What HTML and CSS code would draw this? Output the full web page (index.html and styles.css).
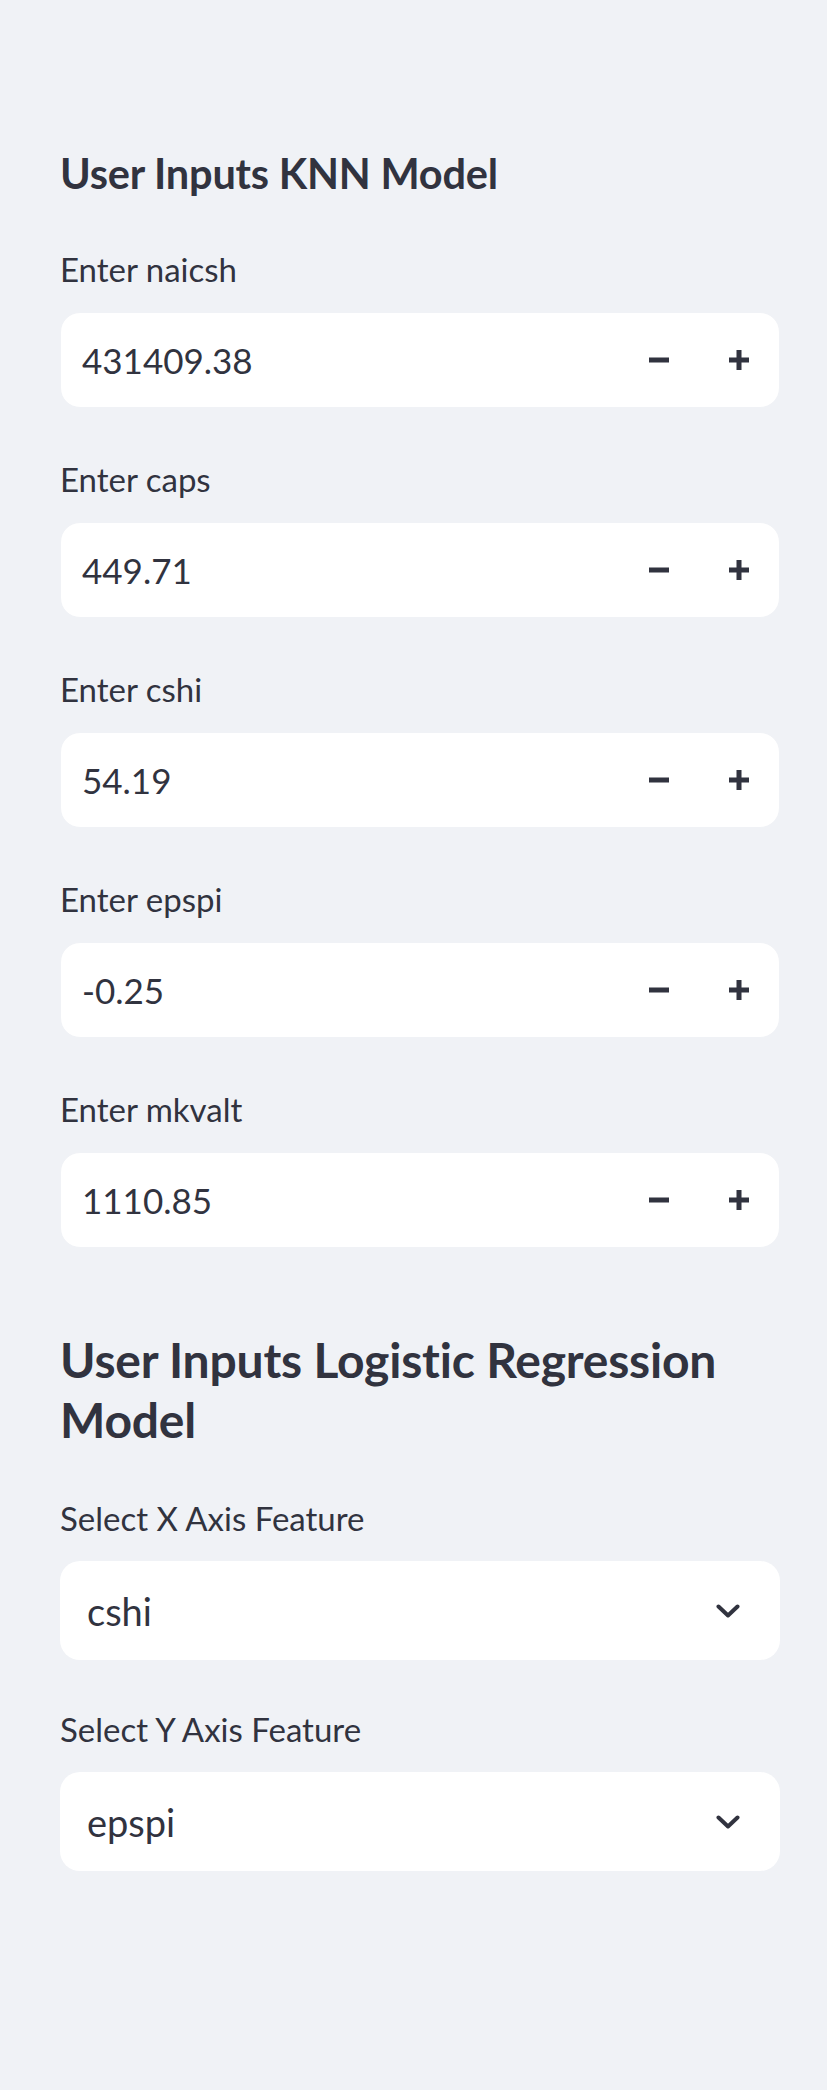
FILE: index.html
```html
<!DOCTYPE html>
<html lang="en">
<head>
<meta charset="utf-8">
<title>User Inputs</title>
<link rel="stylesheet" href="styles.css">
</head>
<body>
<aside class="sidebar">
  <h3 class="subheader">User Inputs KNN Model</h3>

  <div class="widget">
    <label class="label">Enter naicsh</label>
    <div class="number-input">
      <span class="value">431409.38</span>
      <button class="step" aria-label="Decrement"><svg width="20" height="20" viewBox="0 0 20 20"><rect x="0" y="7.5" width="20" height="5" fill="#31333F"/></svg></button>
      <button class="step" aria-label="Increment"><svg width="20" height="20" viewBox="0 0 20 20"><rect x="0" y="7.5" width="20" height="5" fill="#31333F"/><rect x="7.5" y="0" width="5" height="20" fill="#31333F"/></svg></button>
    </div>
  </div>

  <div class="widget">
    <label class="label">Enter caps</label>
    <div class="number-input">
      <span class="value">449.71</span>
      <button class="step" aria-label="Decrement"><svg width="20" height="20" viewBox="0 0 20 20"><rect x="0" y="7.5" width="20" height="5" fill="#31333F"/></svg></button>
      <button class="step" aria-label="Increment"><svg width="20" height="20" viewBox="0 0 20 20"><rect x="0" y="7.5" width="20" height="5" fill="#31333F"/><rect x="7.5" y="0" width="5" height="20" fill="#31333F"/></svg></button>
    </div>
  </div>

  <div class="widget">
    <label class="label">Enter cshi</label>
    <div class="number-input">
      <span class="value">54.19</span>
      <button class="step" aria-label="Decrement"><svg width="20" height="20" viewBox="0 0 20 20"><rect x="0" y="7.5" width="20" height="5" fill="#31333F"/></svg></button>
      <button class="step" aria-label="Increment"><svg width="20" height="20" viewBox="0 0 20 20"><rect x="0" y="7.5" width="20" height="5" fill="#31333F"/><rect x="7.5" y="0" width="5" height="20" fill="#31333F"/></svg></button>
    </div>
  </div>

  <div class="widget">
    <label class="label">Enter epspi</label>
    <div class="number-input">
      <span class="value">-0.25</span>
      <button class="step" aria-label="Decrement"><svg width="20" height="20" viewBox="0 0 20 20"><rect x="0" y="7.5" width="20" height="5" fill="#31333F"/></svg></button>
      <button class="step" aria-label="Increment"><svg width="20" height="20" viewBox="0 0 20 20"><rect x="0" y="7.5" width="20" height="5" fill="#31333F"/><rect x="7.5" y="0" width="5" height="20" fill="#31333F"/></svg></button>
    </div>
  </div>

  <div class="widget">
    <label class="label">Enter mkvalt</label>
    <div class="number-input">
      <span class="value">1110.85</span>
      <button class="step" aria-label="Decrement"><svg width="20" height="20" viewBox="0 0 20 20"><rect x="0" y="7.5" width="20" height="5" fill="#31333F"/></svg></button>
      <button class="step" aria-label="Increment"><svg width="20" height="20" viewBox="0 0 20 20"><rect x="0" y="7.5" width="20" height="5" fill="#31333F"/><rect x="7.5" y="0" width="5" height="20" fill="#31333F"/></svg></button>
    </div>
  </div>

  <h2 class="header">User Inputs Logistic Regression Model</h2>

  <div class="widget widget-select">
    <label class="label">Select X Axis Feature</label>
    <div class="select">
      <span class="value">cshi</span>
      <svg class="chevron" width="24" height="14" viewBox="0 0 24 14"><polyline points="2.5,2.5 12,11.5 21.5,2.5" fill="none" stroke="#31333F" stroke-width="4" stroke-linecap="round" stroke-linejoin="round"/></svg>
    </div>
  </div>

  <div class="widget widget-select">
    <label class="label">Select Y Axis Feature</label>
    <div class="select">
      <span class="value">epspi</span>
      <svg class="chevron" width="24" height="14" viewBox="0 0 24 14"><polyline points="2.5,2.5 12,11.5 21.5,2.5" fill="none" stroke="#31333F" stroke-width="4" stroke-linecap="round" stroke-linejoin="round"/></svg>
    </div>
  </div>
</aside>
</body>
</html>
```

FILE: styles.css
```css
html, body {
  margin: 0;
  padding: 0;
  background: #f0f2f6;
  min-height: 2090px;
}

body {
  font-family: "Lato", "Noto Sans", sans-serif;
  color: #31333f;
}

.sidebar {
  display: flex;
  flex-direction: column;
  padding: 146px 47px 0 60px;
}

.subheader {
  margin: 0 0 41px;
  font-size: 41.5px;
  font-weight: 700;
  line-height: 54px;
  letter-spacing: -0.2px;
}

.header {
  margin: 39px 0 42px;
  font-size: 48px;
  font-weight: 700;
  line-height: 60px;
  letter-spacing: -0.2px;
}

.widget {
  display: flex;
  flex-direction: column;
  margin-bottom: 43px;
}

.label {
  display: block;
  height: 56px;
  margin-bottom: 15px;
  font-size: 33px;
  line-height: 56px;
}

.widget-select .label {
  margin-bottom: 13px;
  line-height: 52px;
  height: 56px;
}

.number-input {
  display: flex;
  align-items: center;
  height: 96px;
  box-sizing: border-box;
  border: 1px solid #f0f2f6;
  border-radius: 20px;
  background: #ffffff;
  overflow: hidden;
}

.number-input .value {
  flex: 1;
  padding-left: 21px;
  font-size: 35px;
}

.step {
  display: flex;
  align-items: center;
  justify-content: center;
  width: 80px;
  height: 100%;
  padding: 0;
  border: 0;
  background: transparent;
}

.step svg {
  display: block;
}

.select {
  display: flex;
  align-items: center;
  height: 99px;
  border-radius: 20px;
  background: #ffffff;
  padding: 0 40px 0 27px;
}

.select .value {
  flex: 1;
  font-size: 38px;
}

.chevron {
  display: block;
}
```
